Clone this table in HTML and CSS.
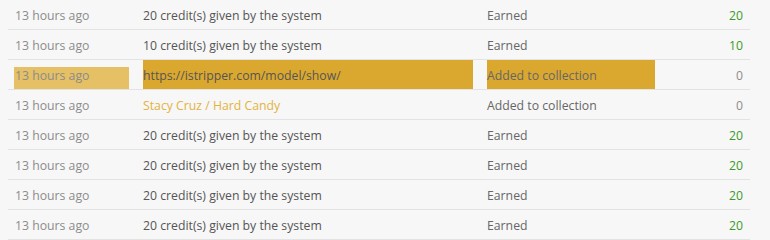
FILE: index.html
```html
<!DOCTYPE html>
<html>
<head>
<meta charset="utf-8">
<link rel="stylesheet" href="styles.css">
</head>
<body>
<table class="log">
  <colgroup>
    <col class="c-date"><col class="c-desc"><col class="c-type"><col class="c-amt">
  </colgroup>
  <tbody>
    <tr><td><div class="date">13 hours ago</div></td><td><div class="desc">20 credit(s) given by the system</div></td><td><div class="type">Earned</div></td><td><div class="amt pos">20</div></td></tr>
    <tr><td><div class="date">13 hours ago</div></td><td><div class="desc">10 credit(s) given by the system</div></td><td><div class="type">Earned</div></td><td><div class="amt pos">10</div></td></tr>
    <tr><td><div class="date sel-light">13 hours ago</div></td><td><div class="desc sel">https://istripper.com/model/show/</div></td><td><div class="type sel">Added to collection</div></td><td><div class="amt">0</div></td></tr>
    <tr><td><div class="date">13 hours ago</div></td><td><div class="desc"><a class="link" href="#">Stacy Cruz / Hard Candy</a></div></td><td><div class="type">Added to collection</div></td><td><div class="amt">0</div></td></tr>
    <tr><td><div class="date">13 hours ago</div></td><td><div class="desc">20 credit(s) given by the system</div></td><td><div class="type">Earned</div></td><td><div class="amt pos">20</div></td></tr>
    <tr><td><div class="date">13 hours ago</div></td><td><div class="desc">20 credit(s) given by the system</div></td><td><div class="type">Earned</div></td><td><div class="amt pos">20</div></td></tr>
    <tr><td><div class="date">13 hours ago</div></td><td><div class="desc">20 credit(s) given by the system</div></td><td><div class="type">Earned</div></td><td><div class="amt pos">20</div></td></tr>
    <tr><td><div class="date">13 hours ago</div></td><td><div class="desc">20 credit(s) given by the system</div></td><td><div class="type">Earned</div></td><td><div class="amt pos">20</div></td></tr>
  </tbody>
</table>
</body>
</html>
```
FILE: styles.css
```css
html, body {
  margin: 0;
  padding: 0;
  background: #f7f7f7;
}
body {
  font-family: "Open Sans", "Liberation Sans", sans-serif;
  font-size: 12.25px;
  color: #555;
}
.log {
  margin-left: 8px;
  width: 742px;
  border-collapse: collapse;
  table-layout: fixed;
}
.c-date { width: 128px; }
.c-desc { width: 344px; }
.c-type { width: 182px; }
.c-amt { width: 88px; }
.log td {
  padding: 0 7px;
  border-bottom: 1px solid #e3e3e3;
  vertical-align: top;
  white-space: nowrap;
}
.log td > div {
  height: 29px;
  line-height: 31px;
}
.date { color: #8c8c8c; }
.desc { color: #555; }
.type { color: #666; }
.amt { text-align: right; color: #8c8c8c; }
.amt.pos { color: #3c9a2a; }
.link { color: #e3b341; text-decoration: none; }
.sel { background: #dba82f; }
.sel-light {
  margin-left: -1px;
  padding-left: 1px;
  background: linear-gradient(to bottom, transparent 7px, #e5c064 7px);
}
```
